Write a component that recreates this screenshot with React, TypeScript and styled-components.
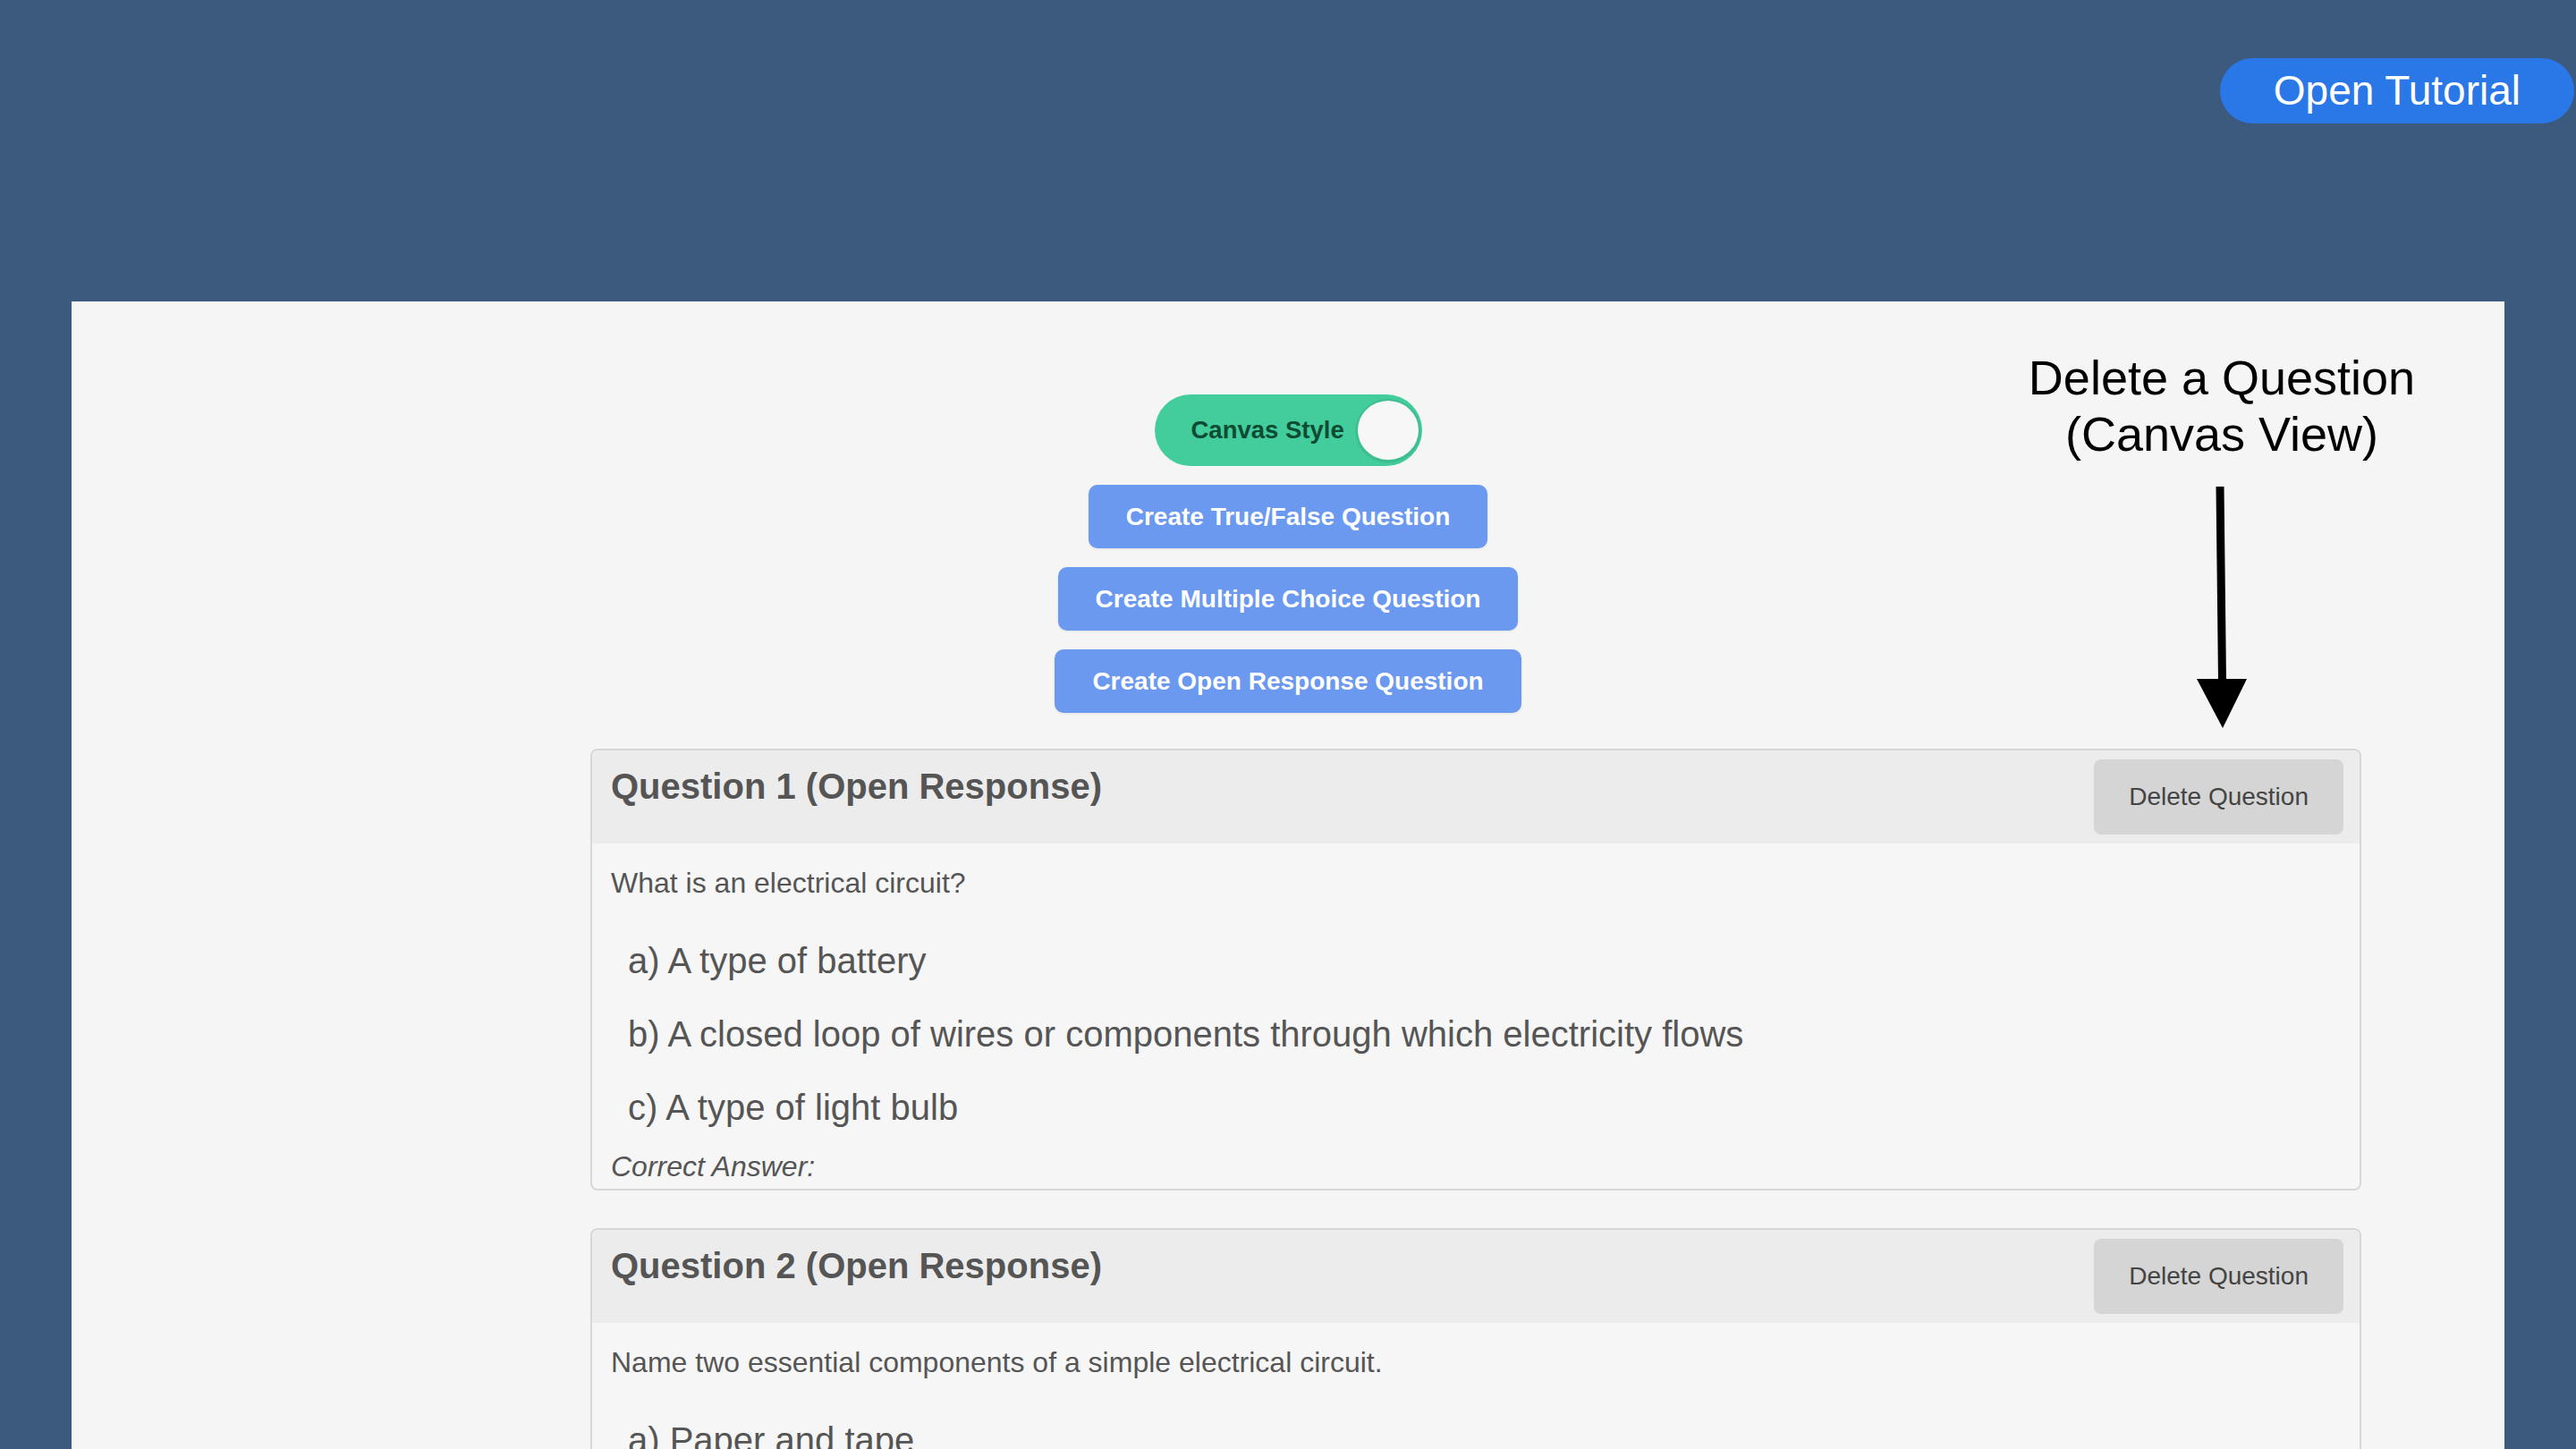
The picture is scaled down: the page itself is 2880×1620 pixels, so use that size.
import React from "react";
import styled, { createGlobalStyle } from "styled-components";

const GlobalStyle = createGlobalStyle`
  html, body {
    margin: 0;
    padding: 0;
    background: #3c5a7e;
    font-family: "Liberation Sans", Arial, Helvetica, sans-serif;
  }
  * { box-sizing: border-box; }
`;

const Page = styled.div`
  min-height: 100vh;
  display: flex;
  flex-direction: column;
`;

const TopBar = styled.header`
  height: 337px;
  display: flex;
  justify-content: flex-end;
  align-items: flex-start;
  padding: 65px 2px 0 0;
`;

const TutorialButton = styled.button`
  height: 73px;
  padding: 0 60px;
  border: none;
  border-radius: 37px;
  background: #2a77e8;
  color: #ffffff;
  font-family: inherit;
  font-size: 46px;
  line-height: 73px;
  cursor: pointer;
`;

const Panel = styled.main`
  position: relative;
  flex: 1;
  margin: 0 80px;
  background: #f5f5f5;
  padding: 104px 0 60px;
  min-height: 1283px;
`;

const Controls = styled.div`
  display: flex;
  flex-direction: column;
  align-items: center;
  gap: 21px;
`;

const Toggle = styled.div`
  width: 299px;
  height: 80px;
  border-radius: 40px;
  background: #43cc9c;
  display: flex;
  align-items: center;
  justify-content: space-between;
  padding: 0 2px 0 41px;
`;

const ToggleLabel = styled.span`
  font-size: 27.5px;
  font-weight: 700;
  color: #0e4b33;
`;

const Knob = styled.span`
  width: 72px;
  height: 70px;
  border-radius: 50%;
  background: #f7f7f7;
  border: 2px solid #3fbf90;
  box-shadow: 0 1px 2px rgba(0, 0, 0, 0.12);
`;

const CreateButton = styled.button`
  height: 71px;
  padding: 0 42px;
  border: none;
  border-radius: 10px;
  background: #6b99f0;
  color: #ffffff;
  font-family: inherit;
  font-size: 28px;
  font-weight: 700;
  box-shadow: 0 1px 3px rgba(0, 0, 0, 0.08);
  cursor: pointer;
`;

const CardList = styled.section`
  margin-top: 40px;
  padding: 0 160px 0 580px;
  display: flex;
  flex-direction: column;
  gap: 42px;
`;

const Card = styled.article`
  border: 2px solid #d7d7d7;
  border-radius: 8px;
  background: #f6f6f6;
  overflow: hidden;
`;

const CardHeader = styled.div`
  display: flex;
  justify-content: space-between;
  align-items: flex-start;
  background: #ececec;
  padding: 10px 18px 10px 21px;
`;

const CardTitle = styled.h3`
  margin: 7px 0 0;
  font-size: 40px;
  line-height: 46px;
  font-weight: 700;
  color: #555555;
`;

const DeleteButton = styled.button`
  height: 84px;
  padding: 0 39px;
  border: none;
  border-radius: 8px;
  background: #d5d5d5;
  color: #444444;
  font-family: inherit;
  font-size: 28px;
  cursor: pointer;
`;

const CardBody = styled.div`
  padding: 0 20px 6px 21px;
`;

const QuestionText = styled.p`
  margin: 26px 0 0;
  font-size: 32px;
  line-height: 37px;
  color: #555555;
`;

const Answers = styled.ul`
  list-style: none;
  margin: 45px 0 0;
  padding: 0 0 0 19px;
  display: flex;
  flex-direction: column;
  gap: 36px;
`;

const Answer = styled.li`
  font-size: 40px;
  line-height: 46px;
  color: #555555;
`;

const CorrectAnswer = styled.p`
  margin: 25px 0 0;
  font-size: 32px;
  line-height: 37px;
  font-style: italic;
  color: #555555;
`;

const Annotation = styled.div`
  position: absolute;
  top: 54px;
  left: 2154px;
  width: 500px;
  display: flex;
  flex-direction: column;
  align-items: center;
`;

const AnnotationText = styled.div`
  font-size: 54px;
  line-height: 63px;
  color: #000000;
  text-align: center;
`;

const ArrowSvg = styled.svg`
  margin-top: 27px;
  display: block;
`;

type Question = {
  title: string;
  text: string;
  answers: string[];
};

const questions: Question[] = [
  {
    title: "Question 1 (Open Response)",
    text: "What is an electrical circuit?",
    answers: [
      "a) A type of battery",
      "b) A closed loop of wires or components through which electricity flows",
      "c) A type of light bulb",
    ],
  },
  {
    title: "Question 2 (Open Response)",
    text: "Name two essential components of a simple electrical circuit.",
    answers: [
      "a) Paper and tape",
      "b) A power source and a conductor",
      "c) Glue and scissors",
    ],
  },
];

export default function App() {
  return (
    <Page>
      <GlobalStyle />
      <TopBar>
        <TutorialButton>Open Tutorial</TutorialButton>
      </TopBar>
      <Panel>
        <Controls>
          <Toggle>
            <ToggleLabel>Canvas Style</ToggleLabel>
            <Knob />
          </Toggle>
          <CreateButton>Create True/False Question</CreateButton>
          <CreateButton>Create Multiple Choice Question</CreateButton>
          <CreateButton>Create Open Response Question</CreateButton>
        </Controls>
        <CardList>
          {questions.map((q) => (
            <Card key={q.title}>
              <CardHeader>
                <CardTitle>{q.title}</CardTitle>
                <DeleteButton>Delete Question</DeleteButton>
              </CardHeader>
              <CardBody>
                <QuestionText>{q.text}</QuestionText>
                <Answers>
                  {q.answers.map((a) => (
                    <Answer key={a}>{a}</Answer>
                  ))}
                </Answers>
                <CorrectAnswer>Correct Answer:</CorrectAnswer>
              </CardBody>
            </Card>
          ))}
        </CardList>
        <Annotation>
          <AnnotationText>
            Delete a Question
            <br />
            (Canvas View)
          </AnnotationText>
          <ArrowSvg width="58" height="270" viewBox="0 0 58 270">
            <line x1="27" y1="0" x2="29.5" y2="218" stroke="#000" strokeWidth="9" />
            <polygon points="1,215 57,215 30,270" fill="#000" />
          </ArrowSvg>
        </Annotation>
      </Panel>
    </Page>
  );
}
